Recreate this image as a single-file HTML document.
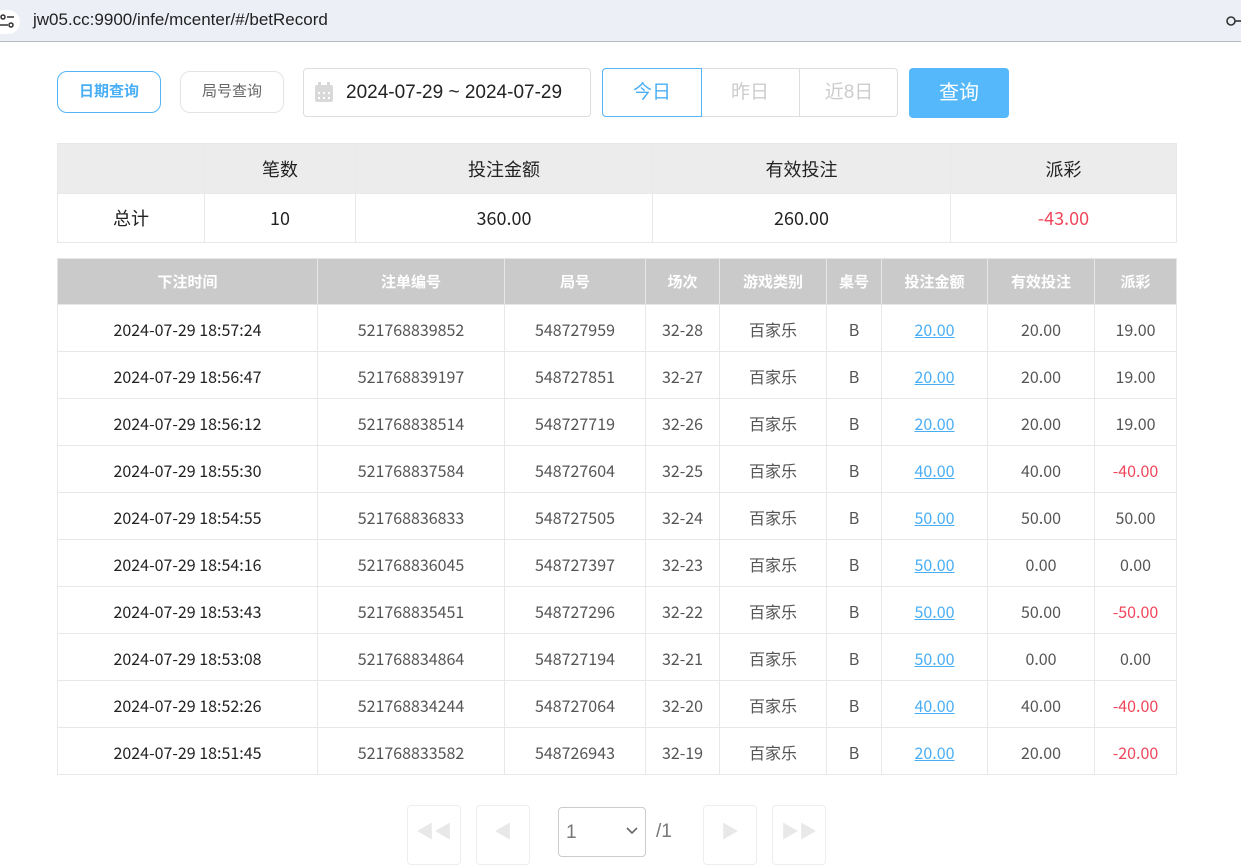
<!DOCTYPE html>
<html><head><meta charset="utf-8"><style>
*{box-sizing:border-box;margin:0;padding:0}
body{width:1241px;height:857px;overflow:hidden;background:#fff;font-family:"Liberation Sans","Noto Sans CJK SC",sans-serif;position:relative}
.a{position:absolute}
.bar{left:0;top:0;width:1241px;height:42px;background:#edeff7;border-bottom:1px solid #b9bbc2}
.url{left:33px;top:10px;font-size:17px;color:#222}
.btn{border:1px solid #e3e3e3;border-radius:10px;text-align:center;font-size:15px;color:#666}
table{border-collapse:collapse;position:absolute;table-layout:fixed;font-family:"Noto Sans CJK SC",sans-serif}
td{border:1px solid #e8e8e8;text-align:center}
.sum td{height:49px;font-size:18px;color:#222}
.sum tr:first-child td{background:#ececec;height:50px}
.m th{background:#cacaca;color:#fff;font-size:15px;height:46px;border:1px solid #e6e6e6;font-weight:bold}
.m td{height:47px;font-size:16px;color:#555;line-height:20px;padding-top:2px}
.m td:first-child{color:#222}
.l{color:#4aaef5;text-decoration:underline}
.r{color:#f0455a!important}
.pg{border:1px solid #eee;border-radius:4px;width:54px;height:60px;top:805px;color:#e8e8e8;font-size:18px;text-align:center;line-height:52px}
</style></head><body>
<div class="a bar"></div>
<div class="a" style="left:-8px;top:10px;width:28px;height:24px;border-radius:12px;background:#fff"></div>
<svg class="a" style="left:0;top:12px" width="20" height="20" viewBox="0 0 20 20"><circle cx="3" cy="5" r="2" fill="none" stroke="#333" stroke-width="1.5"/><line x1="7" y1="5" x2="14" y2="5" stroke="#333" stroke-width="1.5"/><circle cx="11" cy="13" r="2" fill="none" stroke="#333" stroke-width="1.5"/><line x1="0" y1="13" x2="8" y2="13" stroke="#333" stroke-width="1.5"/></svg>
<div class="a url">jw05.cc:9900/infe/mcenter/#/betRecord</div>
<svg class="a" style="left:1226px;top:14px" width="15" height="14"><circle cx="5" cy="7" r="4" fill="none" stroke="#333" stroke-width="1.6"/><line x1="9" y1="7" x2="15" y2="7" stroke="#333" stroke-width="1.6"/></svg>

<div class="a btn" style="left:57px;top:71px;width:104px;height:42px;line-height:40px;border-color:#55b4f6;color:#4aaef5;font-weight:bold">日期查询</div>
<div class="a btn" style="left:180px;top:71px;width:104px;height:42px;line-height:40px">局号查询</div>
<div class="a" style="left:303px;top:68px;width:288px;height:49px;border:1px solid #ddd;border-radius:4px"></div>
<svg class="a" style="left:314px;top:82px" width="20" height="21"><rect x="1" y="3" width="18" height="17" rx="2" fill="#d9d9d9"/><rect x="4" y="0" width="3" height="5" fill="#d9d9d9"/><rect x="13" y="0" width="3" height="5" fill="#d9d9d9"/><g fill="#fff"><rect x="4" y="10" width="2" height="2"/><rect x="9" y="10" width="2" height="2"/><rect x="14" y="10" width="2" height="2"/><rect x="4" y="15" width="2" height="2"/><rect x="9" y="15" width="2" height="2"/><rect x="14" y="15" width="2" height="2"/></g></svg>
<div class="a" style="left:346px;top:82px;font-size:19px;color:#222">2024-07-29 ~ 2024-07-29</div>
<div class="a" style="left:602px;top:68px;width:296px;height:49px;border:1px solid #ddd;border-radius:4px"></div>
<div class="a" style="left:602px;top:68px;width:100px;height:49px;border:1px solid #55b4f6;border-radius:4px 0 0 4px;color:#4aaef5;font-size:19px;text-align:center;line-height:47px">今日</div>
<div class="a" style="left:701px;top:69px;width:99px;height:47px;border-right:1px solid #ddd;color:#ccc;font-size:19px;text-align:center;line-height:47px">昨日</div>
<div class="a" style="left:800px;top:69px;width:98px;height:47px;color:#ccc;font-size:19px;text-align:center;line-height:47px">近8日</div>
<div class="a" style="left:909px;top:68px;width:100px;height:50px;background:#55b8fb;border-radius:4px;color:#fff;font-size:20px;text-align:center;line-height:50px">查询</div>

<table class="sum" style="left:57px;top:143px;width:1120px">
<colgroup><col style="width:147px"><col style="width:151px"><col style="width:297px"><col style="width:298px"><col></colgroup>
<tr><td></td><td>笔数</td><td>投注金额</td><td>有效投注</td><td>派彩</td></tr>
<tr><td>总计</td><td>10</td><td>360.00</td><td>260.00</td><td class="r">-43.00</td></tr>
</table>

<table class="m" style="left:57px;top:258px;width:1120px">
<colgroup><col style="width:260px"><col style="width:187px"><col style="width:141px"><col style="width:74px"><col style="width:107px"><col style="width:55px"><col style="width:106px"><col style="width:107px"><col></colgroup>
<tr><th>下注时间</th><th>注单编号</th><th>局号</th><th>场次</th><th>游戏类别</th><th>桌号</th><th>投注金额</th><th>有效投注</th><th>派彩</th></tr>
<tr><td>2024-07-29 18:57:24</td><td>521768839852</td><td>548727959</td><td>32-28</td><td>百家乐</td><td>B</td><td><span class="l">20.00</span></td><td>20.00</td><td>19.00</td></tr>
<tr><td>2024-07-29 18:56:47</td><td>521768839197</td><td>548727851</td><td>32-27</td><td>百家乐</td><td>B</td><td><span class="l">20.00</span></td><td>20.00</td><td>19.00</td></tr>
<tr><td>2024-07-29 18:56:12</td><td>521768838514</td><td>548727719</td><td>32-26</td><td>百家乐</td><td>B</td><td><span class="l">20.00</span></td><td>20.00</td><td>19.00</td></tr>
<tr><td>2024-07-29 18:55:30</td><td>521768837584</td><td>548727604</td><td>32-25</td><td>百家乐</td><td>B</td><td><span class="l">40.00</span></td><td>40.00</td><td class="r">-40.00</td></tr>
<tr><td>2024-07-29 18:54:55</td><td>521768836833</td><td>548727505</td><td>32-24</td><td>百家乐</td><td>B</td><td><span class="l">50.00</span></td><td>50.00</td><td>50.00</td></tr>
<tr><td>2024-07-29 18:54:16</td><td>521768836045</td><td>548727397</td><td>32-23</td><td>百家乐</td><td>B</td><td><span class="l">50.00</span></td><td>0.00</td><td>0.00</td></tr>
<tr><td>2024-07-29 18:53:43</td><td>521768835451</td><td>548727296</td><td>32-22</td><td>百家乐</td><td>B</td><td><span class="l">50.00</span></td><td>50.00</td><td class="r">-50.00</td></tr>
<tr><td>2024-07-29 18:53:08</td><td>521768834864</td><td>548727194</td><td>32-21</td><td>百家乐</td><td>B</td><td><span class="l">50.00</span></td><td>0.00</td><td>0.00</td></tr>
<tr><td>2024-07-29 18:52:26</td><td>521768834244</td><td>548727064</td><td>32-20</td><td>百家乐</td><td>B</td><td><span class="l">40.00</span></td><td>40.00</td><td class="r">-40.00</td></tr>
<tr><td>2024-07-29 18:51:45</td><td>521768833582</td><td>548726943</td><td>32-19</td><td>百家乐</td><td>B</td><td><span class="l">20.00</span></td><td>20.00</td><td class="r">-20.00</td></tr>
</table>

<div class="a pg" style="left:407px">◀◀</div>
<div class="a pg" style="left:476px">◀</div>
<div class="a" style="left:558px;top:807px;width:88px;height:50px;border:1px solid #ccc;border-radius:4px;font-size:19px;color:#777;padding:14px 0 0 7px">1</div>
<svg class="a" style="left:626px;top:827px" width="12" height="8"><path d="M1 1 L6 6 L11 1" fill="none" stroke="#666" stroke-width="1.6"/></svg>
<div class="a" style="left:656px;top:821px;font-size:19px;color:#777">/1</div>
<div class="a pg" style="left:703px">▶</div>
<div class="a pg" style="left:772px">▶▶</div>
</body></html>
